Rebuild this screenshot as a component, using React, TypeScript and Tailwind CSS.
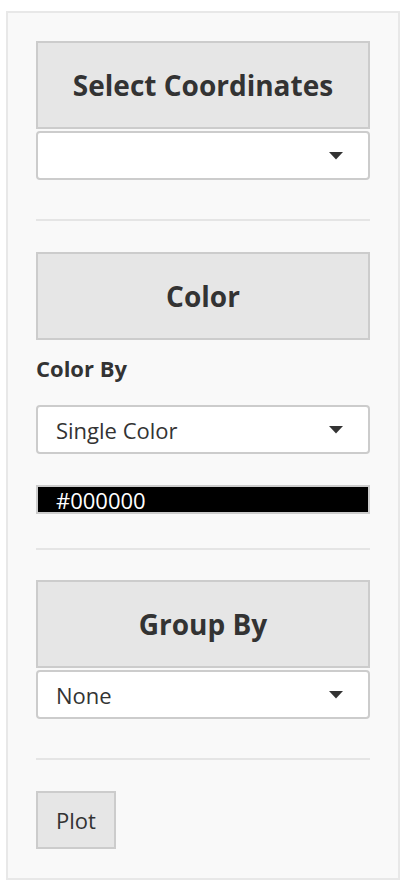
import React from "react";

const font = { fontFamily: '"Open Sans", "Noto Sans", sans-serif' };

function Header({ title }: { title: string }) {
  return (
    <div className="h-[88px] w-full border-2 border-[#cccccc] bg-[#e6e6e6] flex items-center justify-center">
      <span className="text-[28px] font-bold text-[#333333] leading-none">{title}</span>
    </div>
  );
}

function Caret() {
  return (
    <svg width="14" height="8" viewBox="0 0 14 8" className="shrink-0">
      <path d="M0 0 L14 0 L7 7.5 Z" fill="#333333" />
    </svg>
  );
}

function Select({ value }: { value?: string }) {
  return (
    <div className="h-[49px] w-full rounded-[4px] border-2 border-[#cccccc] bg-white flex items-center pl-[18px] pr-[25px]">
      <span className="flex-1 text-[22px] text-[#333333] leading-none">{value ?? ""}</span>
      <Caret />
    </div>
  );
}

function Divider() {
  return <div className="h-[2px] w-full bg-[#e5e5e5]" />;
}

export default function App() {
  return (
    <div className="w-[406px] h-[883px] bg-white pt-[11px] pl-[6px]" style={font}>
      <div className="w-[394px] h-[869px] border-2 border-[#e8e8e8] bg-[#f9f9f9] px-[28px] pt-[28px] flex flex-col">
        <Header title="Select Coordinates" />
        <div className="mt-[2px]">
          <Select />
        </div>
        <div className="mt-[39px]">
          <Divider />
        </div>
        <div className="mt-[31px]">
          <Header title="Color" />
        </div>
        <div className="mt-[13px] text-[22px] font-bold text-[#333333] leading-[30px]">Color By</div>
        <div className="mt-[22px]">
          <Select value="Single Color" />
        </div>
        <div className="mt-[31px] h-[29px] w-full border-2 border-[#cccccc] bg-black flex items-center pl-[18px]">
          <span className="text-[22px] text-white leading-none">#000000</span>
        </div>
        <div className="mt-[34px]">
          <Divider />
        </div>
        <div className="mt-[30px]">
          <Header title="Group By" />
        </div>
        <div className="mt-[2px]">
          <Select value="None" />
        </div>
        <div className="mt-[39px]">
          <Divider />
        </div>
        <div className="mt-[31px]">
          <div className="h-[58px] w-[80px] border-2 border-[#cccccc] bg-[#e6e6e6] flex items-center justify-center">
            <span className="text-[22px] text-[#333333] leading-none">Plot</span>
          </div>
        </div>
      </div>
    </div>
  );
}
